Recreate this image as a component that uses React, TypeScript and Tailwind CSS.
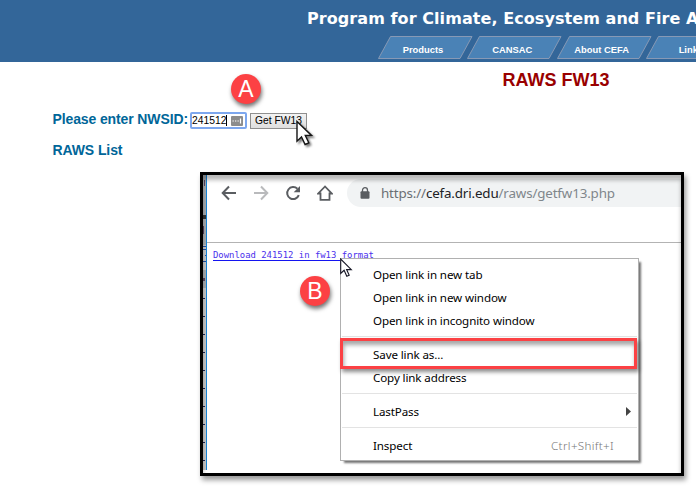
import React from "react";

const tabs = ["Products", "CANSAC", "About CEFA", "Links"];

function NavTab({ label }: { label: string }) {
  return (
    <div className="relative h-[23px] w-[95px] shrink-0">
      <svg className="block" width="95" height="23" viewBox="0 0 95 23">
        <path d="M12.5.5H94L82 22.5H.5Z" fill="#4a82b6" stroke="#8799b5" />
      </svg>
      <span className="absolute inset-x-0 top-[7px] pr-[5px] text-center text-[9.4px] font-bold leading-[14px] text-white">
        {label}
      </span>
    </div>
  );
}

function Badge({ letter }: { letter: string }) {
  return (
    <div className="flex h-[30px] w-[30px] items-center justify-center rounded-full bg-[#fc4144] text-[23px] leading-[30px] text-white shadow-[1px_3px_4px_rgba(0,0,0,0.55)]">
      {letter}
    </div>
  );
}

function Item({ label, right }: { label: string; right?: React.ReactNode }) {
  return (
    <div className="flex h-[23px] items-center justify-between pl-8">
      <span className="whitespace-nowrap tracking-[-0.12px]">{label}</span>
      {right}
    </div>
  );
}

function Separator() {
  return (
    <div className="h-[11px] px-px pt-1">
      <div className="h-px bg-[#e3e3e3]" />
    </div>
  );
}

function ContextMenu() {
  return (
    <div className="relative h-[203px] w-[299px] border border-[#b0b0b0] bg-white pt-1 font-['Noto_Sans','Open_Sans',sans-serif] text-[11.6px] leading-[23px] text-black shadow-[3px_3px_2px_-1px_rgba(0,0,0,0.55)]">
      <Item label="Open link in new tab" />
      <Item label="Open link in new window" />
      <Item label="Open link in incognito window" />
      <Separator />
      <Item label="Save link as..." />
      <Item label="Copy link address" />
      <Separator />
      <Item
        label="LastPass"
        right={
          <svg className="mr-[6px]" width="6" height="9" viewBox="0 0 6 9">
            <path d="M0 0 5 4.5 0 9Z" fill="#444" />
          </svg>
        }
      />
      <Separator />
      <Item
        label="Inspect"
        right={<span className="mr-[24px] font-light tracking-[0.35px] text-[#777]">Ctrl+Shift+I</span>}
      />
      <div className="absolute left-[-1px] top-[79px] h-[31px] w-[297px] border-3 border-[#fb4144] shadow-[2px_3px_4px_rgba(0,0,0,0.45),inset_1px_4px_4px_rgba(0,0,0,0.35)]" />
    </div>
  );
}

function BrowserToolbar() {
  return (
    <div className="flex h-[68px] items-start border-b border-[#b3b3b3]">
      <svg className="mt-[10px] ml-[14px] shrink-0" width="16" height="16" viewBox="0 0 16 16" fill="none" stroke="#5a5d61" strokeWidth="2">
        <path d="M15 8H2M8 1.5 1.7 8 8 14.5" />
      </svg>
      <svg className="mt-[10px] ml-4 shrink-0" width="16" height="16" viewBox="0 0 16 16" fill="none" stroke="#b9babc" strokeWidth="2">
        <path d="M1 8h13M8 1.5 14.3 8 8 14.5" />
      </svg>
      <svg className="mt-[10px] ml-4 shrink-0" width="16" height="16" viewBox="0 0 16 16">
        <path d="M13.8 10.2A6 6 0 1 1 12.4 3.8" fill="none" stroke="#5a5d61" strokeWidth="2" />
        <path d="M15 1v6.3H8.7Z" fill="#5a5d61" />
      </svg>
      <svg className="mt-[10px] ml-4 shrink-0" width="16" height="16" viewBox="0 0 16 16" fill="none" stroke="#5a5d61" strokeWidth="1.8">
        <path d="M8 1.5 1.3 8.5h2.2v6.3h9V8.5h2.2Z" />
      </svg>
      <div className="ml-[14px] mt-1 flex h-7 flex-1 items-center rounded-l-full bg-[#f1f3f4] pl-[13px]">
        <svg className="shrink-0" width="10" height="12" viewBox="0 0 10 12">
          <path d="M2.5 5V3.2a2.5 2.5 0 0 1 5 0V5" fill="none" stroke="#5a5d61" strokeWidth="1.3" />
          <rect x=".5" y="4.3" width="9" height="7.5" rx="1" fill="#5a5d61" />
        </svg>
        <span className="ml-[11px] whitespace-nowrap font-['Noto_Sans','Open_Sans',sans-serif] text-[13.4px] leading-7 tracking-[-0.16px] text-[#80868b]">
          <span className="text-[#6b6f73]">https://</span>
          <span className="text-[#202124]">cefa.dri.edu</span>/raws/getfw13.php
        </span>
      </div>
    </div>
  );
}

const ticks = [298, 316, 334, 352, 370, 388, 406, 424, 442, 460];

function PastedWindow() {
  return (
    <div className="relative ml-[200px] flex h-[304px] w-[484px] border-3 border-black bg-white shadow-[2px_4px_5px_rgba(0,0,0,0.4)]">
      <svg className="shrink-0" width="4" height="295" viewBox="203 175 4 295" shapeRendering="crispEdges">
        <path d="M203 175h3v295h-3Z" fill="#c4c4c4" />
        <path d="M203 175h3v70h-3ZM203 270h3v18h-3Z" fill="#a4a8ac" />
        <path d="M203 215h3v4h-3Z" fill="#333" />
        <path d="M203 226h1v8h-1ZM203 278h2v3h-2ZM204 180h1v6h-1Z" fill="#55435f" />
        <path d="M203 246h3v1h-3ZM203 249h3v1h-3ZM205 255h1v1h-1ZM203 261h3v1h-3Z" fill="#234d9e" />
        {ticks.map((y) => (
          <rect key={y} x="203" y={y} width="2" height="1" fill="#182050" />
        ))}
        <path d="M206 175h1v295h-1Z" fill="#1683d5" />
      </svg>
      <div className="flex min-w-0 flex-1 flex-col">
        <BrowserToolbar />
        <div className="ml-[6px] mt-[6px] h-[11px] w-[163px] whitespace-nowrap font-['DejaVu_Sans_Mono',monospace] text-[8.92px] leading-[12px] text-[#4a30ec]">
          Download 241512 in fw13 format
        </div>
        <div className="ml-[6px] h-px w-[127px] bg-[#1414f0]" />
      </div>
      <div className="absolute left-[137px] top-[83px]">
        <ContextMenu />
      </div>
      <div className="absolute left-[97px] top-[101px]">
        <Badge letter="B" />
      </div>
      <svg className="absolute left-[137px] top-[83px]" width="14" height="20" viewBox="0 0 14 20">
        <path d="M.7 1v14.5l3.4-3.2 2.7 6 2.4-1-2.6-5.7h4.7Z" fill="#fff" stroke="#161625" strokeWidth="1.1" />
      </svg>
      <div className="pointer-events-none absolute inset-0 shadow-[inset_0_5px_4px_rgba(0,0,0,0.28)]" />
    </div>
  );
}

export default function App() {
  return (
    <div className="h-[490px] w-[696px] overflow-hidden bg-white font-['Liberation_Sans',Arial,sans-serif]">
      <header className="h-[62px] overflow-hidden bg-[#336699]">
        <div className="ml-[307px] h-9 whitespace-nowrap font-['DejaVu_Sans',sans-serif] text-[16px] font-bold leading-[37px] tracking-[0.07px] text-white">
          Program for Climate, Ecosystem and Fire Applications
        </div>
        <nav className="ml-[378px] flex w-[400px]">
          {tabs.map((label) => (
            <div key={label} className="w-[89.3px] shrink-0">
              <NavTab label={label} />
            </div>
          ))}
        </nav>
      </header>
      <main>
        <h1 className="ml-[502.5px] mt-[7px] h-[22px] whitespace-nowrap text-[18px] font-bold leading-[22px] text-[#990000]">
          RAWS FW13
        </h1>
        <div className="relative mt-[21px] flex h-[17px] items-center pl-[52.5px]">
          <label className="w-[137.5px] whitespace-nowrap text-[14px] font-bold leading-[15px] tracking-[-0.12px] text-[#006699] pb-[2px]">
            Please enter NWSID:
          </label>
          <div className="flex h-[17px] w-[57px] items-center rounded-[2px] border-2 border-[#7da7ee] bg-white">
            <span className="w-[34px] text-[10.3px] leading-[13px] text-black">241512</span>
            <span className="h-[11px] w-px bg-black" />
            <svg className="ml-[4px] shrink-0" width="12" height="10" viewBox="0 0 12 10">
              <rect width="12" height="10" rx="1" fill="#8c8c8c" />
              <path d="M1.5 5h1.3M4 5h1.3M6.5 5h1.3M9.5 2.5v5" stroke="#fff" strokeWidth="1.2" />
            </svg>
          </div>
          <button className="ml-[3px] h-[16px] w-[57px] whitespace-nowrap border border-[#8f8f8f] bg-linear-to-b from-[#f3f3f3] to-[#dedede] text-[10.3px] leading-[14px] text-black">
            Get FW13
          </button>
          <div className="absolute left-[231px] top-[-38px]">
            <Badge letter="A" />
          </div>
          <svg className="absolute left-[296px] top-[8px] drop-shadow-[2px_2px_1px_rgba(0,0,0,0.5)]" width="18" height="27" viewBox="0 0 18 27">
            <path d="M1 1.5v19.7l4.5-4.3 3.6 7.6 3.7-1.7-3.5-7.4h6.2Z" fill="#fff" stroke="#151515" strokeWidth="1.4" />
          </svg>
        </div>
        <h2 className="ml-[52.5px] mt-[13px] h-[17px] text-[14px] font-bold leading-[17px] tracking-[-0.1px] text-[#006699]">
          RAWS List
        </h2>
        <div className="mt-[13px]">
          <PastedWindow />
        </div>
      </main>
    </div>
  );
}
